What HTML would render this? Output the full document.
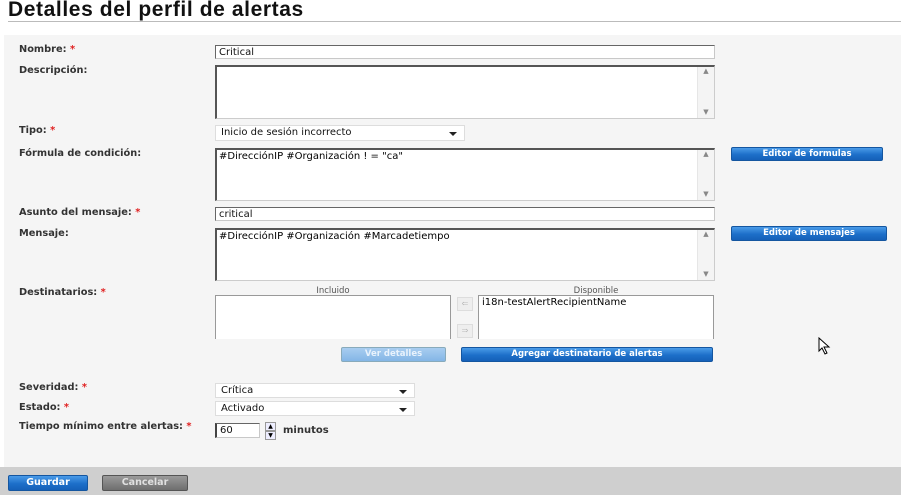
<!DOCTYPE html>
<html><head><meta charset="utf-8"><style>
body{margin:0;width:901px;height:495px;overflow:hidden;background:#fff;font-family:"DejaVu Sans","Liberation Sans",sans-serif;position:relative}
.a{position:absolute}
h1{position:absolute;left:8px;top:-2px;margin:0;font:bold 21px "Liberation Sans",sans-serif;color:#111;letter-spacing:0.6px}
.rule{left:8px;top:21px;width:893px;height:1px;background:#bbb}
.panel{left:4px;top:35px;width:897px;height:432px;background:#f5f5f5}
.lbl{font-size:9.8px;font-weight:bold;color:#333;left:19px}
.lbl i{color:#e02020;font-style:normal}
.in{background:#fff;border:1px solid #c8c8c8;border-top:1px solid #666;border-left:1px solid #666;box-sizing:border-box;font-size:10px;color:#111;padding:1px 3px;line-height:11px}
.ta{background:#fff;border:1px solid #ccc;border-top:2px solid #555;border-left:2px solid #555;box-sizing:border-box;font-size:10px;padding:1px 2px}
.sb{position:absolute;right:0;top:0;bottom:0;width:16px;background:#f4f4f4;border-left:1px solid #e6e6e6;font-size:7px;color:#888;text-align:center}
.sel{background:#fff;border:1px solid #ddd;box-sizing:border-box;font-size:10px;padding:1px 5px;color:#111}
.sel:after{content:"";position:absolute;right:7px;top:6px;border:4px solid transparent;border-top:4px solid #222;border-bottom:0}
.btn{background:linear-gradient(#4a9be8,#1d6fc9 55%,#1560b8);border:1px solid #1456a0;border-radius:2px;color:#fff;font-size:8.5px;font-weight:bold;text-align:center;box-sizing:border-box;line-height:12px}
.foot{left:0;top:467px;width:901px;height:28px;background:#cfcfcf}
</style></head><body>
<h1>Detalles del perfil de alertas</h1>
<div class="a rule"></div>
<div class="a panel"></div>

<div class="a lbl" style="top:44px">Nombre: <i>*</i></div>
<div class="a in" style="left:215px;top:45px;width:500px;height:14px">Critical</div>

<div class="a lbl" style="top:65px">Descripción:</div>
<div class="a ta" style="left:215px;top:65px;width:500px;height:54px"><div class="sb">▲<div style="position:absolute;bottom:2px;width:100%">▼</div></div></div>

<div class="a lbl" style="top:125px">Tipo: <i>*</i></div>
<div class="a sel" style="left:215px;top:125px;width:250px;height:16px">Inicio de sesión incorrecto</div>

<div class="a lbl" style="top:148px">Fórmula de condición:</div>
<div class="a ta" style="left:215px;top:148px;width:500px;height:53px">#DirecciónIP #Organización ! = "ca"<div class="sb">▲<div style="position:absolute;bottom:2px;width:100%">▼</div></div></div>
<div class="a btn" style="left:731px;top:147px;width:152px;height:14px">Editor de formulas</div>

<div class="a lbl" style="top:207px">Asunto del mensaje: <i>*</i></div>
<div class="a in" style="left:215px;top:207px;width:500px;height:14px">critical</div>

<div class="a lbl" style="top:228px">Mensaje:</div>
<div class="a ta" style="left:215px;top:228px;width:500px;height:53px">#DirecciónIP #Organización #Marcadetiempo<div class="sb">▲<div style="position:absolute;bottom:2px;width:100%">▼</div></div></div>
<div class="a btn" style="left:731px;top:226px;width:156px;height:15px">Editor de mensajes</div>

<div class="a lbl" style="top:287px">Destinatarios: <i>*</i></div>
<div class="a" style="left:215px;top:286px;width:236px;text-align:center;font-size:8.5px;color:#555">Incluido</div>
<div class="a" style="left:478px;top:286px;width:236px;text-align:center;font-size:8.5px;color:#555">Disponible</div>
<div class="a" style="left:215px;top:295px;width:236px;height:44px;background:#fff;border:1px solid #999;border-bottom:0;box-sizing:border-box"></div>
<div class="a" style="left:478px;top:295px;width:236px;height:44px;background:#fff;border:1px solid #999;border-bottom:0;box-sizing:border-box;font-size:10px;padding:1px 3px">i18n-testAlertRecipientName</div>
<div class="a" style="left:457px;top:297px;width:14px;height:12px;background:#eee;border:1px solid #ddd;font-size:8px;color:#bbb;text-align:center;line-height:12px">⇐</div>
<div class="a" style="left:457px;top:324px;width:14px;height:12px;background:#eee;border:1px solid #ddd;font-size:8px;color:#bbb;text-align:center;line-height:12px">⇒</div>
<div class="a btn" style="left:341px;top:347px;width:105px;height:15px;background:linear-gradient(#a8cdf0,#84b6e6);border-color:#8ab;color:#e8f2fc">Ver detalles</div>
<div class="a btn" style="left:461px;top:347px;width:252px;height:15px">Agregar destinatario de alertas</div>

<div class="a lbl" style="top:382px">Severidad: <i>*</i></div>
<div class="a sel" style="left:215px;top:383px;width:200px;height:15px">Crítica</div>
<div class="a lbl" style="top:402px">Estado: <i>*</i></div>
<div class="a sel" style="left:215px;top:401px;width:200px;height:15px">Activado</div>
<div class="a lbl" style="top:421px">Tiempo mínimo entre alertas: <i>*</i></div>
<div class="a in" style="left:215px;top:423px;width:45px;height:15px;border-left:2px solid #444">60</div>
<div class="a" style="left:265px;top:422px;width:9px;height:7px;border:1px solid #999;background:#eef;font-size:6px;line-height:7px;text-align:center">▲</div>
<div class="a" style="left:265px;top:431px;width:9px;height:7px;border:1px solid #999;background:#eef;font-size:6px;line-height:7px;text-align:center">▼</div>
<div class="a" style="left:283px;top:425px;font-size:10px;font-weight:bold;color:#333">minutos</div>

<svg class="a" style="left:818px;top:337px" width="14" height="18" viewBox="0 0 14 18"><path d="M1 1 L1 14 L4 11 L7 17 L9 16 L6 10 L11 10 Z" fill="#fff" stroke="#000" stroke-width="1"/></svg>

<div class="a foot"></div>
<div class="a btn" style="left:8px;top:475px;width:80px;height:16px;line-height:14px;font-size:9.5px">Guardar</div>
<div class="a btn" style="left:102px;top:475px;width:86px;height:16px;line-height:14px;font-size:9.5px;background:linear-gradient(#9a9a9a,#6e6e6e);border-color:#555;color:#e0e0e0">Cancelar</div>
</body></html>
